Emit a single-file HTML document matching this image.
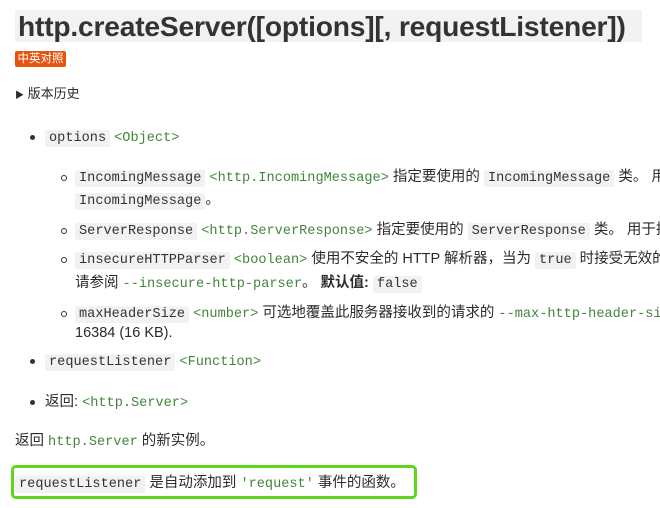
<!DOCTYPE html>
<html><head><meta charset="utf-8"><style>
*{margin:0;padding:0;box-sizing:border-box}
html,body{overflow:hidden}
body{width:660px;height:508px;background:#fff;font-family:"Liberation Sans","Noto Sans CJK SC",sans-serif;font-size:14.5px;color:#2b2b2b;position:relative}
.l{position:absolute;white-space:nowrap;line-height:20px;overflow:hidden;right:0}
code{font-family:"Liberation Mono","Noto Sans CJK SC",monospace;font-size:13.6px;background:#f2f2f2;padding:1px 4px;border-radius:2px;color:#333}
.g{font-family:"Liberation Mono",monospace;font-size:13.6px;color:#43853d}
.t{position:absolute;left:15px;top:10px;width:627px;height:32px;background:#f2f2f2;font-weight:bold;font-size:28.2px;line-height:32px;padding-left:3px;color:#333;white-space:nowrap;letter-spacing:-0.2px;overflow:hidden}
.badge{position:absolute;left:15px;top:51px;width:51px;height:16px;background:#e8540f;color:#fff;font-size:11.5px;line-height:16px;text-align:center;border-radius:2px}
.b{position:absolute;width:5px;height:5px;border-radius:50%;background:#333}
.c{position:absolute;width:6px;height:6px;border-radius:50%;border:1px solid #333}
.box{position:absolute;left:11px;top:465px;width:406px;height:34px;border:3px solid #5fd61e;border-radius:5px}
</style></head><body>
<div class="t">http.createServer([options][, requestListener])</div>
<div class="badge">中英对照</div>
<div class="l" style="left:15px;top:84px;font-size:13px"><span style="font-size:9px">▶</span> 版本历史</div>
<div class="b" style="left:30px;top:135px"></div>
<div class="l" style="left:45px;top:127px"><code>options</code> <span class="g">&lt;Object&gt;</span></div>
<div class="c" style="left:61px;top:175px"></div>
<div class="l" style="left:75px;top:167px"><code>IncomingMessage</code> <span class="g">&lt;http.IncomingMessage&gt;</span> 指定要使用的 <code>IncomingMessage</code> 类。 用于扩展原始的</div>
<div class="l" style="left:75px;top:190px"><code>IncomingMessage</code>。</div>
<div class="c" style="left:61px;top:228px"></div>
<div class="l" style="left:75px;top:220px"><code>ServerResponse</code> <span class="g">&lt;http.ServerResponse&gt;</span> 指定要使用的 <code>ServerResponse</code> 类。 用于扩展</div>
<div class="c" style="left:61px;top:257px"></div>
<div class="l" style="left:75px;top:249px"><code>insecureHTTPParser</code> <span class="g">&lt;boolean&gt;</span> 使用不安全的 HTTP 解析器，当为 <code>true</code> 时接受无效的</div>
<div class="l" style="left:75px;top:273px">请参阅 <span class="g">--insecure-http-parser</span>。 <b>默认值:</b> <code>false</code></div>
<div class="c" style="left:61px;top:311px"></div>
<div class="l" style="left:75px;top:303px"><code>maxHeaderSize</code> <span class="g">&lt;number&gt;</span> 可选地覆盖此服务器接收到的请求的 <span class="g">--max-http-header-size</span></div>
<div class="l" style="left:75px;top:323px">16384 (16 KB).</div>
<div class="b" style="left:30px;top:359px"></div>
<div class="l" style="left:45px;top:351px"><code>requestListener</code> <span class="g">&lt;Function&gt;</span></div>
<div class="b" style="left:30px;top:400px"></div>
<div class="l" style="left:45px;top:392px">返回: <span class="g">&lt;http.Server&gt;</span></div>
<div class="l" style="left:15px;top:431px">返回 <span class="g">http.Server</span> 的新实例。</div>
<div class="box"></div>
<div class="l" style="left:15px;top:473px"><code>requestListener</code> 是自动添加到 <span class="g">'request'</span> 事件的函数。</div>
</body></html>
